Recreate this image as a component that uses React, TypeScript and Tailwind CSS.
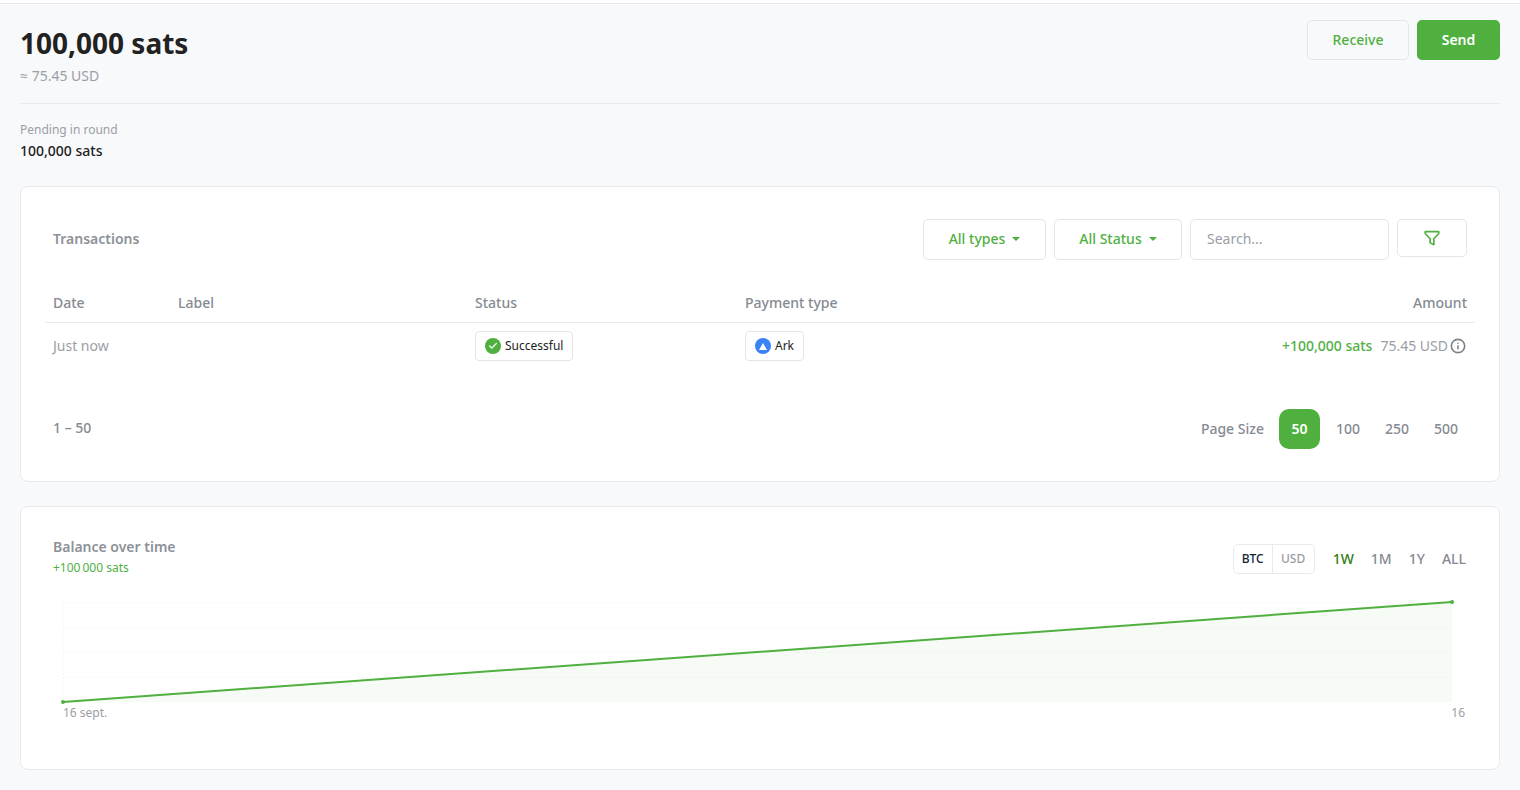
import { Check, Info } from "lucide-react";

const GREEN = "#4fb03f";

// Small downward caret used by the two filter dropdowns.
function Caret() {
  return <span className="ml-[7px] inline-block border-x-[4px] border-t-[4px] border-x-transparent border-t-[#4fb03f]" />;
}

function Dropdown({ label, className }: { label: string; className: string }) {
  return (
    <button
      type="button"
      className={`flex h-[41px] items-center justify-center rounded-[5px] border border-[#e2e5ea] bg-white pb-[2px] text-sm font-medium text-[#4fb03f] ${className}`}
    >
      {label}
      <Caret />
    </button>
  );
}

function Chip({ icon, label }: { icon: React.ReactNode; label: string }) {
  return (
    <span className="inline-flex h-[30px] items-center gap-1 rounded-[4px] border border-[#e2e5ea] bg-white pl-[9px] pr-[9px] text-xs text-[#222]">
      {icon}
      {label}
    </span>
  );
}

function BalanceChart() {
  const grid = [602.5, 627.5, 652.5, 677.5];
  return (
    <svg width="1440" height="125" viewBox="21 595 1440 125" className="block">
      {grid.map((y) => (
        <line key={y} x1="63" x2="1452" y1={y} y2={y} stroke="#eef0f2" strokeDasharray="1 3" />
      ))}
      <line x1="63.5" x2="63.5" y1="602" y2="702" stroke="#eef0f2" strokeDasharray="1 3" />
      <path d="M63 702L1452 602V702Z" fill={GREEN} fillOpacity="0.05" />
      <path d="M63 702L1452 602" stroke={GREEN} strokeWidth="2" fill="none" />
      <circle cx="63" cy="702" r="2" fill={GREEN} />
      <circle cx="1452" cy="602" r="2" fill={GREEN} />
    </svg>
  );
}

export default function App() {
  return (
    <div
      className="h-[790px] overflow-hidden bg-[#f8f9fb] text-[#222]"
      style={{ fontFamily: '"Noto Sans", "Open Sans", sans-serif' }}
    >
      <div className="h-[4px] border-b border-[#e6e7ea] bg-white" />
      <div className="px-5">
        <header className="flex h-[100px] items-start justify-between border-b border-[#e8eaee] pt-4">
          <div>
            <h1 className="text-[28px] leading-[46px] font-bold text-[#222]">100,000 sats</h1>
            <p className="text-sm leading-5 text-[#9a9ea6]">≈ 75.45 USD</p>
          </div>
          <div className="flex gap-2">
            <button
              type="button"
              className="h-10 w-[102px] rounded-[5px] border border-[#e2e5ea] text-sm font-medium text-[#4fb03f]"
            >
              Receive
            </button>
            <button
              type="button"
              className="h-10 w-[83px] rounded-[5px] bg-[#4fb03f] text-sm font-semibold text-white"
            >
              Send
            </button>
          </div>
        </header>

        <div className="h-[82px] pt-[17px]">
          <p className="text-xs leading-[17px] text-[#9a9ea6]">Pending in round</p>
          <p className="mt-[3px] text-sm leading-5 font-medium text-[#222]">100,000 sats</p>
        </div>

        <section className="h-[296px] rounded-lg border border-[#e8eaee] bg-white px-8 pt-8">
          <div className="flex h-[41px] items-start justify-between">
            <h2 className="pt-[10px] text-sm leading-5 font-semibold text-[#8d9198]">Transactions</h2>
            <div className="flex gap-2">
              <Dropdown label="All types" className="w-[123px]" />
              <Dropdown label="All Status" className="w-[128px]" />
              <input
                placeholder="Search..."
                className="h-[41px] w-[199px] rounded-[5px] border border-[#e2e5ea] px-4 pb-[2px] text-sm outline-none placeholder:text-[#9a9ea6]"
              />
              <button
                type="button"
                className="flex h-[38px] w-[70px] items-center justify-center rounded-[5px] border border-[#e2e5ea]"
              >
                <svg width="18" height="18" viewBox="0 0 24 24" fill="none" stroke={GREEN} strokeWidth="2.2" strokeLinejoin="round">
                  <path d="M3 3.5h18V6l-6.5 7v8l-5-2.5V13L3 6Z" />
                </svg>
              </button>
            </div>
          </div>

          <div className="-mx-2 mt-[23px]">
            <div className="grid h-10 grid-cols-[125px_297px_270px_1fr_auto] items-center border-b border-[#e8eaee] px-2 pt-[1px] text-sm font-medium text-[#868a91]">
              <span>Date</span>
              <span>Label</span>
              <span>Status</span>
              <span>Payment type</span>
              <span>Amount</span>
            </div>
            <div className="grid h-[46px] grid-cols-[125px_297px_270px_1fr_auto] items-center px-2 text-sm">
              <span className="text-[#9a9ea6]">Just now</span>
              <span />
              <span>
                <Chip
                  label="Successful"
                  icon={
                    <span className="flex h-4 w-4 items-center justify-center rounded-full bg-[#4fb03f]">
                      <Check size={10} color="white" strokeWidth={3} />
                    </span>
                  }
                />
              </span>
              <span>
                <Chip
                  label="Ark"
                  icon={
                    <span className="flex h-4 w-4 items-center justify-center rounded-full bg-[#3b82f6]">
                      <svg width="8" height="7" viewBox="0 0 8 7">
                        <path d="M4 0L8 7H0Z" fill="white" />
                      </svg>
                    </span>
                  }
                />
              </span>
              <span className="flex items-center">
                <span className="font-medium text-[#4fb03f]">+100,000 sats</span>
                <span className="ml-2 text-[#9a9ea6]">75.45 USD</span>
                <Info size={16} color="#7d8187" strokeWidth={2.4} className="mr-[1px] ml-[2px]" />
              </span>
            </div>
          </div>

          <div className="mt-10 flex h-10 items-center justify-between">
            <span className="-mt-[2px] text-sm font-medium text-[#868a91]">1 – 50</span>
            <div className="-mr-[7px] flex items-center text-sm font-medium text-[#868a91]">
              <span className="mr-[15px]">Page Size</span>
              <span className="flex h-10 w-[41px] items-center justify-center rounded-[10px] bg-[#4fb03f] font-semibold text-white">50</span>
              <span className="w-[56px] text-center">100</span>
              <span className="w-[42px] text-center">250</span>
              <span className="w-[56px] text-center">500</span>
            </div>
          </div>
        </section>

        <section className="mt-6 h-[264px] rounded-lg border border-[#e8eaee] bg-white">
          <div className="flex h-[88px] items-start justify-between px-8 pt-[30px]">
            <div>
              <h2 className="text-sm leading-5 font-semibold text-[#8d9198]">Balance over time</h2>
              <p className="mt-[2px] text-xs leading-[17px] text-[#4fb03f]">+100{"\u202f"}000 sats</p>
            </div>
            <div className="mt-[7px] mr-[1px] flex items-center">
              <div className="flex h-[30px] rounded-[5px] border border-[#e8eaee] text-xs">
                <span className="flex w-[39px] items-center justify-center border-r border-[#e8eaee] font-medium text-[#123]">BTC</span>
                <span className="flex w-[41px] items-center justify-center font-medium text-[#9a9ea6]">USD</span>
              </div>
              <div className="ml-[18px] flex gap-[17px] text-sm font-medium text-[#868a91]">
                <span className="text-[#2f7d16]">1W</span>
                <span>1M</span>
                <span>1Y</span>
                <span>ALL</span>
              </div>
            </div>
          </div>
          <BalanceChart />
          <div className="-mt-[15px] flex justify-between pl-[42px] pr-[34px] text-xs leading-4 text-[#9a9ea6]">
            <span>16 sept.</span>
            <span>16</span>
          </div>
        </section>
      </div>
    </div>
  );
}
